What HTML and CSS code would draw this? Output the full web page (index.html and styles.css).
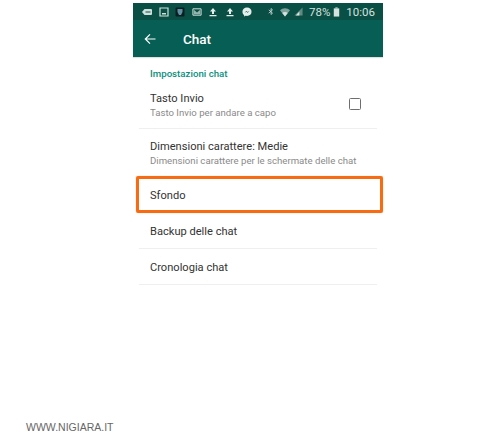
FILE: index.html
```html
<!DOCTYPE html>
<html lang="it">
<head>
<meta charset="utf-8">
<title>Chat</title>
<link rel="stylesheet" href="styles.css">
</head>
<body>
<div class="page">
  <main class="phone">
    <div class="status">
      <div class="status-left">
        <svg class="si" viewBox="0 0 10 8"><path d="M2.5 1H9a1 1 0 0 1 1 1v4a1 1 0 0 1-1 1H2.500L0 4z" fill="#cfe0dc"/><path d="M3.500 3.500h5v1h-5z" fill="#0a4f46"/></svg>
        <svg class="si" viewBox="0 0 10 10"><path d="M1 1h8v8H1z" fill="none" stroke="#cfe0dc" stroke-width="1.200"/><path d="M3 6h4v1.500H3z" fill="#cfe0dc"/></svg>
        <svg class="si" viewBox="0 0 10 10"><rect x="0.500" y="0.500" width="9" height="9" rx="1" fill="#0b1e22"/><path d="M2.500 2h5v3L6 8H4L2.500 5z" fill="#5f8fa0"/></svg>
        <svg class="si" viewBox="0 0 11 10"><path d="M1 1.500h9v7H1z" fill="none" stroke="#cfe0dc" stroke-width="1.100"/><path d="M2 2.500l3.500 3 3.500-3v5H2z" fill="#cfe0dc" opacity=".7"/></svg>
        <svg class="si" viewBox="0 0 10 10"><path d="M5 1L8 4.500H6V7H4V4.500H2zM1.500 8h7v1.200h-7z" fill="#e4eeeb"/></svg>
        <svg class="si" viewBox="0 0 10 10"><path d="M5 1L8 4.500H6V7H4V4.500H2zM1.500 8h7v1.200h-7z" fill="#e4eeeb"/></svg>
        <svg class="si" viewBox="0 0 11 11"><path d="M5.500.500C8.500.500 10.500 2.500 10.500 5.200S8.500 9.800 5.500 9.800c-.6 0-1.100-.1-1.600-.2L2.300 10.500V8.800C1.100 8 .5 6.700.5 5.200.5 2.500 2.500.500 5.500.500z" fill="#e4eeeb"/><path d="M2.800 6.300l2-2 1.300 1.200 2.100-1.200-2 2-1.300-1.200z" fill="#0a4f46"/></svg>
      </div>
      <div class="status-right">
        <svg class="sb" viewBox="0 0 8 10"><path d="M1 2.800l5 4.400L4 9V1l2 1.800-5 4.400" fill="none" stroke="#d5e2df" stroke-width="1"/></svg>
        <svg class="sw" viewBox="0 0 12 11"><path d="M6 10.500L.5 3.500C3.500.500 8.500.500 11.500 3.500z" fill="#7fa39b"/><path d="M6 10.500L3 6.500C4.500 5 7.500 5 9 6.500z" fill="#d5e2df"/></svg>
        <svg class="sn" viewBox="0 0 10 10"><path d="M9.500.500V9.500H.5z" fill="#5f8a80"/><path d="M6 5v4.500H2z" fill="#d5e2df"/></svg>
        <span class="pct">78%</span>
        <svg class="bat" viewBox="0 0 7 11"><path d="M2.200.500h2.600v1H2.200z" fill="#d5e2df"/><path d="M.5 1.500h6v9h-6z" fill="#d5e2df"/></svg>
        <span class="time">10:06</span>
      </div>
    </div>
    <header class="toolbar">
      <svg class="back" viewBox="0 0 12 12"><path d="M11.500 6H1.500M6 1.300L1.300 6 6 10.700" fill="none" stroke="#fff" stroke-width="1.200"/></svg>
      <h1 class="title">Chat</h1>
    </header>
    <h2 class="section">Impostazioni chat</h2>
    <section class="list">
      <div class="row row-two">
        <div class="texts">
          <div class="primary">Tasto Invio</div>
          <div class="secondary">Tasto Invio per andare a capo</div>
        </div>
        <span class="check"></span>
      </div>
      <div class="row row-dim">
        <div class="texts">
          <div class="primary">Dimensioni carattere: Medie</div>
          <div class="secondary">Dimensioni carattere per le schermate delle chat</div>
        </div>
      </div>
      <div class="row row-one row-marked"><div class="primary">Sfondo</div></div>
      <div class="row row-one"><div class="primary">Backup delle chat</div></div>
      <div class="row row-one"><div class="primary">Cronologia chat</div></div>
    </section>
  </main>
  <footer class="credit">WWW.NIGIARA.IT</footer>
</div>
</body>
</html>
```

FILE: styles.css
```css
* { box-sizing: border-box; }
html, body { margin: 0; padding: 0; background: #fff; }
.page { width: 500px; height: 440px; padding-top: 3px; display: flex; flex-direction: column; }
.phone { width: 250px; margin-left: 133px; font-family: Roboto, "Liberation Sans", sans-serif; }
.status { height: 17px; background: #0a4f46; display: flex; align-items: center; justify-content: space-between; padding: 0 8px 0 9px; }
.status-left { display: flex; align-items: center; gap: 6.600px; }
.status-right { display: flex; align-items: center; color: #d5e2df; font-size: 11.500px; }
.si { width: 10px; height: 10px; display: block; }
.sb { width: 6px; height: 9px; margin-right: 5px; }
.sw { width: 12px; height: 10px; margin-right: 3px; }
.sn { width: 9px; height: 9px; margin-right: 6px; }
.pct { margin-right: 3px; }
.bat { width: 7px; height: 10px; margin-right: 6px; }
.toolbar { height: 37px; background: #075e54; display: flex; align-items: center; padding-left: 11px; box-shadow: 0 1px 1px rgba(0,0,0,.12); }
.back { width: 12px; height: 12px; display: block; margin-right: 27px; }
.title { margin: 0; padding-top: 1px; font-size: 13.500px; font-weight: 500; color: #fff; }
.section { margin: 0; padding: 11px 0 0 17px; height: 28px; font-size: 9.700px; line-height: 12px; font-weight: 500; color: #0a8f7c; }
.list { display: flex; flex-direction: column; }
.row { margin: 0 6px; display: flex; align-items: center; justify-content: space-between; padding: 0 11px; border-bottom: 1px solid #efefef; position: relative; }
.row-two { height: 44px; padding-bottom: 3px; }
.row-dim { height: 48px; border-bottom: 0; padding-top: 1px; }
.row-one { height: 36px; padding-top: 2px; }
.primary { font-size: 11.100px; line-height: 14px; color: #333; }
.secondary { font-size: 9.640px; line-height: 13px; color: #8a8a8a; }
.texts { display: flex; flex-direction: column; }
.check { width: 12px; height: 12px; border: 1.500px solid #6e6e6e; border-radius: 1.500px; margin: 0 5px 2px 0; }
.row-marked { border-bottom: 0; }
.row-marked::after { content: ""; position: absolute; left: -3px; right: -6px; top: -1px; bottom: 0; border: 3px solid #f76b12; border-radius: 2px; box-shadow: 0 0 1px rgba(247,107,18,.6); }
.credit { margin: auto 0 0 26px; padding-bottom: 6px; font-family: "Liberation Sans", Arial, sans-serif; font-size: 10.500px; line-height: 13px; color: #666; }
```
